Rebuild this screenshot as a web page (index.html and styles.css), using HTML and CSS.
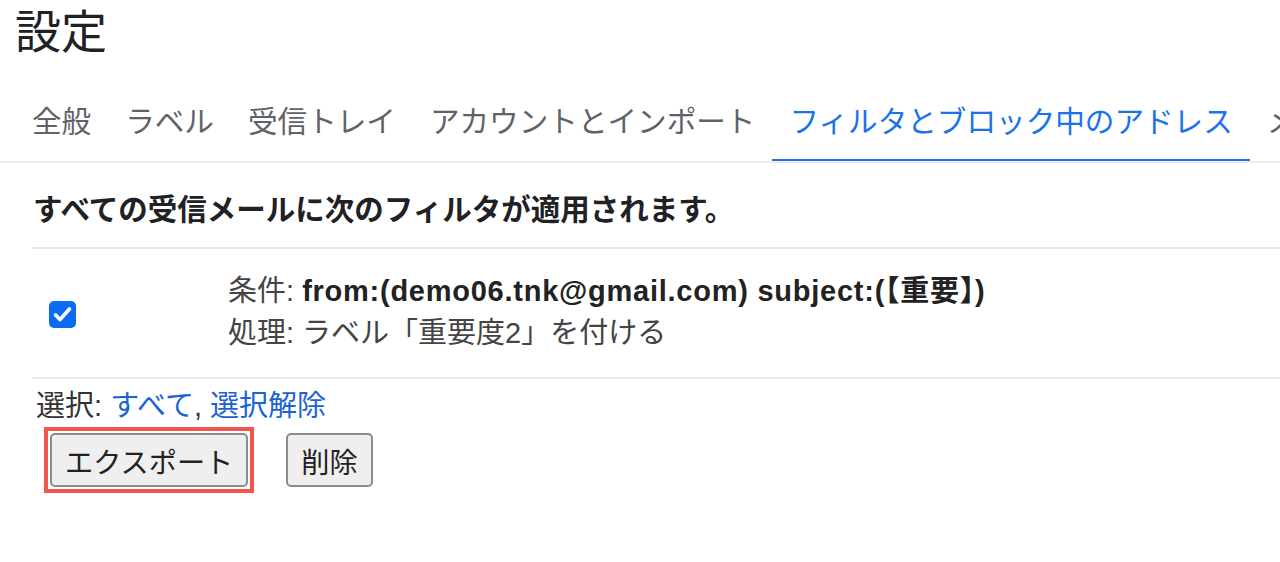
FILE: index.html
```html
<!DOCTYPE html>
<html lang="ja">
<head>
<meta charset="utf-8">
<title>設定</title>
<link rel="stylesheet" href="styles.css">
</head>
<body>
<h1 class="title">設定</h1>
<nav class="tabs">
  <a class="tab">全般</a>
  <a class="tab">ラベル</a>
  <a class="tab">受信トレイ</a>
  <a class="tab">アカウントとインポート</a>
  <a class="tab active">フィルタとブロック中のアドレス</a>
  <a class="tab">メール転送と POP/IMAP</a>
</nav>
<main class="content">
  <p class="lead">すべての受信メールに次のフィルタが適用されます。</p>
  <div class="filters">
    <div class="filter-row">
      <div class="check-cell">
        <svg class="checkbox" width="27" height="27" viewBox="0 0 27 27" aria-hidden="true">
          <rect x="0" y="0" width="27" height="27" rx="5" fill="#0b6cf3"/>
          <path d="M6.5 14 L11 18.5 L20.5 8" fill="none" stroke="#fff" stroke-width="3.6" stroke-linecap="round" stroke-linejoin="round"/>
        </svg>
      </div>
      <div class="filter-text">
        <div>条件: <b>from:(demo06.tnk@gmail.com) subject:(【重要】)</b></div>
        <div>処理: ラベル「重要度2」を付ける</div>
      </div>
    </div>
  </div>
  <div class="select">選択: <a class="link">すべて</a>, <a class="link">選択解除</a></div>
  <div class="actions">
    <span class="highlight"><button class="btn">エクスポート</button></span>
    <button class="btn">削除</button>
  </div>
</main>
</body>
</html>
```
FILE: styles.css
```css
html, body {
  margin: 0;
  padding: 0;
  background: #fff;
}
body {
  font-family: "Liberation Sans", "Noto Sans CJK JP", sans-serif;
  color: #222;
  overflow: hidden;
}
.title {
  margin: 0;
  padding-left: 15px;
  font-size: 46px;
  font-weight: 400;
  line-height: 64px;
  color: #202124;
}
.tabs {
  display: flex;
  white-space: nowrap;
  overflow: hidden;
  padding-left: 15px;
  border-bottom: 2px solid #eceeef;
}
.tab {
  flex: none;
  padding: 36px 17px 19px;
  font-family: "Noto Sans CJK JP", sans-serif;
  font-size: 29.6px;
  line-height: 40px;
  color: #5f6368;
  border-bottom: 3px solid transparent;
  margin-bottom: -1px;
}
.tab.active {
  color: #1a73e8;
  border-bottom-color: #1a73e8;
}
.content {
  padding-left: 32px;
}
.lead {
  margin: 24px 0 20px 1px;
  font-family: "Noto Sans CJK JP", sans-serif;
  font-size: 29.5px;
  line-height: 40px;
  font-weight: 700;
  color: #202124;
}
.filters {
  border-top: 2px solid #e8e8e8;
  border-bottom: 2px solid #e8e8e8;
}
.filter-row {
  display: flex;
  align-items: center;
  padding: 21px 0 23px;
}
.check-cell {
  width: 196px;
  flex: none;
  padding-left: 17px;
  box-sizing: border-box;
  display: flex;
  align-items: center;
  padding-top: 4px;
}
.checkbox {
  display: block;
}
.filter-text {
  font-size: 29px;
  line-height: 42px;
  color: #444;
}
.filter-text b {
  color: #222;
  letter-spacing: 0.75px;
}
.select {
  margin-top: 7px;
  padding-left: 4px;
  font-size: 29px;
  line-height: 40px;
  color: #333;
}
.link {
  color: #1a62d6;
}
.actions {
  display: flex;
  align-items: center;
  gap: 32px;
  padding-left: 12px;
  margin-top: 1px;
}
.highlight {
  display: inline-flex;
  border: 4px solid #f0564b;
  padding: 2px;
}
.btn {
  font-family: "Noto Sans CJK JP", sans-serif;
  font-size: 28.2px;
  height: 54px;
  padding: 0 13px;
  background: #efefef;
  border: 2px solid #8c8c8c;
  border-radius: 5px;
  color: #222;
}
```
